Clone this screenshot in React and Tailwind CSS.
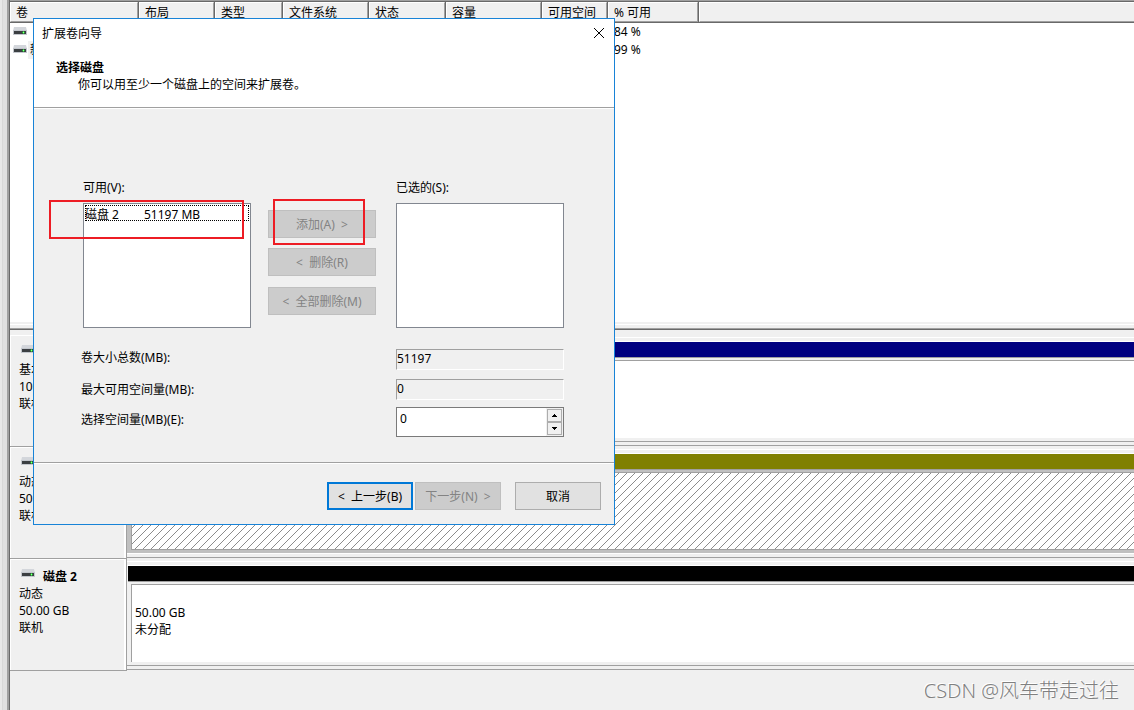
import React, { useState } from 'react';

const columns = [
  { label: '卷', width: 'w-[129px]' },
  { label: '布局', width: 'w-[76px]' },
  { label: '类型', width: 'w-[68px]' },
  { label: '文件系统', width: 'w-[86px]' },
  { label: '状态', width: 'w-[77px]' },
  { label: '容量', width: 'w-[96px]' },
  { label: '可用空间', width: 'w-[66px]' },
  { label: '% 可用', width: 'w-[91px]' },
  { label: '', width: '' },
];

const volumes = [
  { name: '', free: '84 %' },
  { name: '新加卷', free: '99 %' },
];

const disks = [
  { name: '磁盘 0', type: '基本', size: '100.00 GB', bar: 'bg-[#000080]' },
  { name: '磁盘 1', type: '动态', size: '50.00 GB', bar: 'bg-[#808000]', selected: true },
  { name: '磁盘 2', type: '动态', size: '50.00 GB', bar: 'bg-black', region: ['50.00 GB', '未分配'] },
];

function DriveIcon() {
  return (
    <svg width="14" height="9" viewBox="0 0 14 9" className="shrink-0" aria-hidden="true">
      <path d="M1 0h12l1 4H0z" fill="#d3d6db" />
      <rect y="3" width="14" height="5" fill="#c3c7cd" />
      <rect x="1" y="4" width="12" height="3" fill="#3b3f42" />
      <rect x="9" y="5" width="3" height="1" fill="#1fae2c" />
      <rect x="10" y="4" width="1" height="3" fill="#2fd03c" />
      <rect x="10" y="5" width="1" height="1" fill="#8dff8c" />
    </svg>
  );
}

function VolumeList() {
  return (
    <div className="h-80 shrink-0 overflow-hidden bg-white">
      <table className="w-full table-fixed border-collapse text-left">
        <thead>
          <tr className="h-[21px]">
            {columns.map((col, i) => (
              <th key={i} className={`${col.width} group p-0 font-normal`}>
                <div className="h-[21px] border-r border-b border-[#696969] group-last:border-r-0">
                  <div className="h-5 border border-t-white border-l-white border-r-[#a0a0a0] border-b-[#a0a0a0] bg-[#f0f0f0] pl-[5px] leading-5 group-last:border-r-0">
                    {col.label}
                  </div>
                </div>
              </th>
            ))}
          </tr>
        </thead>
        <tbody>
          {volumes.map((vol) => (
            <tr key={vol.free} className="h-[18px]">
              <td className="p-0 pl-[3px]">
                <div className="flex h-[18px] items-start gap-px">
                  <div className="pt-1">
                    <DriveIcon />
                  </div>
                  {vol.name && <span className="bg-[#f0f0f0] px-0.5 leading-[18px]">{vol.name}</span>}
                </div>
              </td>
              <td colSpan={6} className="p-0" />
              <td className="p-0 pl-[6px] leading-[18px]">{vol.free}</td>
              <td className="p-0" />
            </tr>
          ))}
        </tbody>
      </table>
    </div>
  );
}

function Hatch() {
  return (
    <svg width="100%" height="100%" className="block" aria-hidden="true">
      <defs>
        <pattern id="hatch" width="8" height="8" patternUnits="userSpaceOnUse">
          <path
            d="M6 0h1v1h-1zM5 1h1v1h-1zM4 2h1v1h-1zM3 3h1v1h-1zM2 4h1v1h-1zM1 5h1v1h-1zM0 6h1v1h-1zM7 7h1v1h-1z"
            fill="#8c8c8c"
            shapeRendering="crispEdges"
          />
        </pattern>
      </defs>
      <rect width="100%" height="100%" fill="url(#hatch)" />
    </svg>
  );
}

function DiskRow({ disk }) {
  return (
    <div className="flex h-28">
      <div className="w-[117px] shrink-0 border-r border-b border-[#a0a0a0]">
        <div className="h-full border-t border-r-2 border-l border-white pt-2 pl-2">
          <div className="flex gap-2 pl-0.5">
            <div className="pt-px">
              <DriveIcon />
            </div>
            <b className="leading-[17px]">{disk.name}</b>
          </div>
          <p>{disk.type}</p>
          <p>{disk.size}</p>
          <p>联机</p>
        </div>
      </div>
      <div className="flex min-w-0 flex-1 flex-col pt-0.5">
        <div className="h-1 border-t border-white" />
        <div className={`flex flex-1 flex-col border-t border-white ${disk.selected ? 'border-b bg-[#c0c0c0] pb-[3px]' : 'pb-[3px]'}`}>
          <div className={`ml-px h-4 border-b border-[#a0a0a0] ${disk.bar}`} />
          <div className="mt-0.5 ml-1 flex-1 border-t border-l border-[#a0a0a0] bg-white">
            {disk.selected && (
              <div className="h-[77px] border-b border-[#a0a0a0]">
                <Hatch />
              </div>
            )}
            {disk.region && (
              <div className="pt-[19px] pl-[3px]">
                {disk.region.map((line) => (
                  <p key={line}>{line}</p>
                ))}
              </div>
            )}
          </div>
        </div>
        <div className={`h-[5px] border-b border-[#a0a0a0] ${disk.selected ? '' : 'border-t'}`} />
        <div className="h-px" />
      </div>
    </div>
  );
}

function PushButton({ children, className, ...props }) {
  return (
    <button
      type="button"
      className={`h-7 border border-[#adadad] bg-[#e1e1e1] whitespace-pre disabled:border-[#bfbfbf] disabled:bg-[#cccccc] disabled:text-[#838383] ${className}`}
      {...props}
    >
      {children}
    </button>
  );
}

const listClass =
  'block h-[125px] w-full appearance-none overflow-hidden border border-[#828790] bg-white outline-none';
const fieldClass =
  'w-[168px] border border-t-[#a0a0a0] border-r-white border-b-white border-l-[#a0a0a0] bg-[#f0f0f0] h-[21px] pb-0.5 outline-none';

function ExtendVolumeWizard() {
  const [amount, setAmount] = useState(0);

  return (
    <div
      role="dialog"
      aria-labelledby="wizard-title"
      className="absolute top-[18px] left-[33px] w-[582px] border border-[#1883d7] bg-[#f0f0f0]"
    >
      <div className="border-b border-[#a0a0a0] bg-white">
        <div className="flex h-7 items-center justify-between pr-[9px] pl-2">
          <h1 id="wizard-title">扩展卷向导</h1>
          <button type="button" aria-label="关闭">
            <svg width="12" height="12" viewBox="0 0 12 12" fill="none" stroke="#000">
              <path d="M1 1l10 10M11 1L1 11" />
            </svg>
          </button>
        </div>
        <div className="h-[60px] pt-3 pl-[22px]">
          <h2 className="font-bold">选择磁盘</h2>
          <p className="pl-[22px]">你可以用至少一个磁盘上的空间来扩展卷。</p>
        </div>
      </div>

      <div className="border-t border-b border-t-white border-b-[#a0a0a0] pt-[70px] pr-[50px] pb-[25px] pl-[49px]">
        <div className="flex justify-between">
          <div className="w-[168px]">
            <label htmlFor="available" className="mb-[7px] block">可用(V):</label>
            <select id="available" size={6} className={listClass}>
              <option value="2" className="m-px h-4 p-0 leading-[15px] outline-1 -outline-offset-1 outline-black outline-dotted">
                {'磁盘 2' + '\u00a0'.repeat(8) + '51197 MB'}
              </option>
            </select>
          </div>
          <div className="ml-[17px] w-[108px] pt-[31px]">
            <PushButton disabled className="mb-[10px] block w-full">{'添加(A)  >'}</PushButton>
            <PushButton disabled className="mb-[11px] block w-full">{'<  删除(R)'}</PushButton>
            <PushButton disabled className="block w-full">{'<  全部删除(M)'}</PushButton>
          </div>
          <div className="ml-5 w-[168px]">
            <label htmlFor="selected" className="mb-[7px] block">已选的(S):</label>
            <select id="selected" size={6} className={listClass} />
          </div>
        </div>

        <div className="-ml-0.5 pt-[21px]">
          <div className="mb-[9px] flex items-start justify-between">
            <label htmlFor="total">卷大小总数(MB):</label>
            <input id="total" readOnly value="51197" className={fieldClass} />
          </div>
          <div className="mb-[7px] flex items-start justify-between">
            <label htmlFor="max" className="pt-[2px]">最大可用空间量(MB):</label>
            <input id="max" readOnly value="0" className={fieldClass} />
          </div>
          <div className="flex items-start justify-between">
            <label htmlFor="amount" className="pt-1">选择空间量(MB)(E):</label>
            <div className="flex h-[30px] w-[168px] border border-[#7a7a7a] bg-white">
              <input
                id="amount"
                value={amount}
                onChange={(e) => setAmount(Number(e.target.value) || 0)}
                className="min-w-0 flex-1 pb-2 pl-[3px] outline-none"
              />
              <div className="flex w-[17px] flex-col bg-[#f0f0f0] p-px">
                <button
                  type="button"
                  aria-label="增加"
                  onClick={() => setAmount(amount + 1)}
                  className="flex flex-1 items-center justify-center border border-[#adadad]"
                >
                  <svg width="5" height="3" viewBox="0 0 5 3" shapeRendering="crispEdges">
                    <path d="M2 0h1v1h1v1h1v1H0V2h1V1h1z" />
                  </svg>
                </button>
                <button
                  type="button"
                  aria-label="减少"
                  onClick={() => setAmount(Math.max(0, amount - 1))}
                  className="flex flex-1 items-center justify-center border border-[#adadad]"
                >
                  <svg width="5" height="3" viewBox="0 0 5 3" shapeRendering="crispEdges">
                    <path d="M0 0h5v1H4v1H3v1H2V2H1V1H0z" />
                  </svg>
                </button>
              </div>
            </div>
          </div>
        </div>
      </div>

      <div className="flex justify-end border-t border-white pt-[18px] pr-[13px] pb-[14px]">
        <PushButton className="w-[86px] border-2 !border-[#0078d7]">{'<  上一步(B)'}</PushButton>
        <PushButton disabled className="ml-0.5 w-[86px]">{'下一步(N)  >'}</PushButton>
        <PushButton className="ml-[14px] w-[86px]">取消</PushButton>
      </div>
    </div>
  );
}

function App() {
  return (
    <div className="relative flex min-h-screen overflow-hidden bg-[#f0f0f0] font-['Noto_Sans','Noto_Sans_CJK_SC',sans-serif] text-xs leading-[17px] text-black">
      <div className="flex w-[10px] shrink-0 border-r border-[#696969] bg-[#e8e8e8]">
        <div className="flex-1 border-r border-[#d8d8d8]" />
        <div className="w-1 bg-[#e0e0e0]" />
        <div className="w-0.5 bg-[#a0a0a0]" />
      </div>
      <main className="min-w-0 flex-1 border-t border-[#a0a0a0]">
        <div className="border-t border-b border-[#696969]">
          <VolumeList />
          <div className="mt-0.5 h-[5px] border-t border-b border-t-white border-b-[#a0a0a0]" />
        </div>
        <div className="pt-[5px]">
          {disks.map((disk) => (
            <DiskRow key={disk.name} disk={disk} />
          ))}
        </div>
      </main>

      <ExtendVolumeWizard />

      <div className="pointer-events-none absolute top-[200px] left-[49px] h-[39px] w-[195px] border-2 border-[#ed1c24]" />
      <div className="pointer-events-none absolute top-[199px] left-[273px] h-[46px] w-[92px] border-2 border-[#ed1c24]" />

      <p className="absolute right-[15px] bottom-1 text-xl leading-[30px] font-light text-[#808080] [text-shadow:-1px_-1px_0_#fff]">
        CSDN @风车带走过往
      </p>
    </div>
  );
}

export default App;
